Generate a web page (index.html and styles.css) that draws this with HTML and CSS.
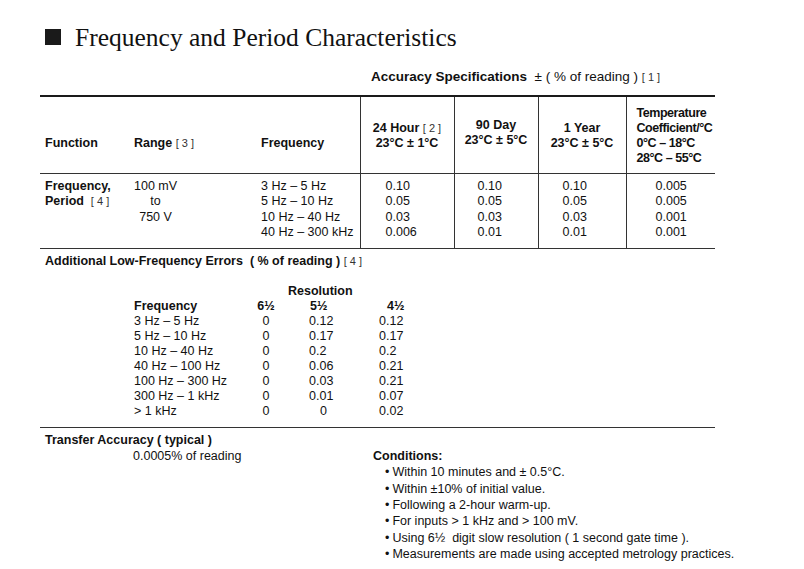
FILE: index.html
```html
<!DOCTYPE html>
<html lang="en">
<head>
    <meta charset="UTF-8">
    <title>Frequency and Period Characteristics</title>
    <link rel="stylesheet" href="styles.css">
</head>
<body>
    <div class="page">
        <h1 class="title"><span class="title-mark"></span>Frequency and Period Characteristics</h1>

        <p class="accuracy-head"><b>Accuracy Specifications</b> &nbsp;± ( % of reading ) <span class="ref">[ 1 ]</span></p>

        <table class="spec">
            <colgroup>
                <col class="c-func">
                <col class="c-range">
                <col class="c-freq">
                <col class="c-24h">
                <col class="c-90d">
                <col class="c-1y">
                <col class="c-temp">
            </colgroup>
            <thead>
                <tr>
                    <th class="h-left">Function</th>
                    <th class="h-left">Range <span class="ref">[ 3 ]</span></th>
                    <th class="h-left">Frequency</th>
                    <th class="h-mid sep">24 Hour <span class="ref">[ 2 ]</span><br>23°C ± 1°C</th>
                    <th class="h-mid sep h-90">90 Day<br>23°C ± 5°C</th>
                    <th class="h-mid sep">1 Year<br>23°C ± 5°C</th>
                    <th class="h-temp sep">Temperature<br>Coefficient/°C<br>0°C – 18°C<br>28°C – 55°C</th>
                </tr>
            </thead>
            <tbody>
                <tr>
                    <td class="func">Frequency,<br>Period &nbsp;<span class="ref">[ 4 ]</span></td>
                    <td class="range"><span class="range-box">100 mV<br>to<br>750 V</span></td>
                    <td class="freq">3 Hz – 5 Hz<br>5 Hz – 10 Hz<br>10 Hz – 40 Hz<br>40 Hz – 300 kHz</td>
                    <td class="val sep v-24h">0.10<br>0.05<br>0.03<br>0.006</td>
                    <td class="val sep v-90d">0.10<br>0.05<br>0.03<br>0.01</td>
                    <td class="val sep v-1y">0.10<br>0.05<br>0.03<br>0.01</td>
                    <td class="val sep v-temp">0.005<br>0.005<br>0.001<br>0.001</td>
                </tr>
            </tbody>
        </table>

        <section class="lowfreq">
            <h2 class="section-head">Additional Low-Frequency Errors &nbsp;( % of reading ) <span class="ref">[ 4 ]</span></h2>
            <table class="lf">
                <colgroup>
                    <col class="lf-pad">
                    <col class="lf-freq">
                    <col class="lf-6">
                    <col class="lf-5">
                    <col class="lf-4">
                </colgroup>
                <tr class="lf-head">
                    <td></td><td></td>
                    <th colspan="3" class="lf-res">Resolution</th>
                </tr>
                <tr class="lf-head">
                    <td></td>
                    <th>Frequency</th>
                    <th class="d6">6½</th>
                    <th class="d5">5½</th>
                    <th class="d4">4½</th>
                </tr>
                <tr><td></td><td>3 Hz – 5 Hz</td><td class="d6">0</td><td class="d5">0.12</td><td>0.12</td></tr>
                <tr><td></td><td>5 Hz – 10 Hz</td><td class="d6">0</td><td class="d5">0.17</td><td>0.17</td></tr>
                <tr><td></td><td>10 Hz – 40 Hz</td><td class="d6">0</td><td class="d5">0.2</td><td>0.2</td></tr>
                <tr><td></td><td>40 Hz – 100 Hz</td><td class="d6">0</td><td class="d5">0.06</td><td>0.21</td></tr>
                <tr><td></td><td>100 Hz – 300 Hz</td><td class="d6">0</td><td class="d5">0.03</td><td>0.21</td></tr>
                <tr><td></td><td>300 Hz – 1 kHz</td><td class="d6">0</td><td class="d5">0.01</td><td>0.07</td></tr>
                <tr><td></td><td>&gt; 1 kHz</td><td class="d6">0</td><td class="d5 zero">0</td><td>0.02</td></tr>
            </table>
        </section>

        <div class="bottom">
            <div class="transfer">
                <h2 class="section-head">Transfer Accuracy ( typical )</h2>
                <p class="transfer-val">0.0005% of reading</p>
            </div>
            <div class="conditions">
                <h3>Conditions:</h3>
                <ul>
                    <li>Within 10 minutes and ± 0.5°C.</li>
                    <li>Within ±10% of initial value.</li>
                    <li>Following a 2-hour warm-up.</li>
                    <li>For inputs &gt; 1 kHz and &gt; 100 mV.</li>
                    <li>Using 6½ &nbsp;digit slow resolution ( 1 second gate time ).</li>
                    <li>Measurements are made using accepted metrology practices.</li>
                </ul>
            </div>
        </div>
    </div>
</body>
</html>
```

FILE: styles.css
```css
* {
    margin: 0;
    padding: 0;
    box-sizing: border-box;
}

body {
    background: #fff;
    color: #111;
    font-family: "Liberation Sans", Arial, sans-serif;
    font-size: 12.5px;
    line-height: 15px;
}

.page {
    width: 804px;
    padding: 22px 0 0 40px;
}

/* Title */
.title {
    display: flex;
    align-items: center;
    height: 30px;
    font-family: "Liberation Serif", "Times New Roman", serif;
    font-weight: normal;
    font-size: 25.5px;
    color: #111;
}

.title-mark {
    width: 16px;
    height: 16px;
    margin: 0 14px 0 5px;
    background: #1a1a1a;
}

.accuracy-head {
    margin: 17px 0 0 331px;
    font-size: 13.5px;
    line-height: 16px;
}

.ref {
    font-weight: normal;
    font-size: 11px;
    color: #333;
}

/* Main spec table */
.spec {
    margin-top: 10px;
    width: 675px;
    table-layout: fixed;
    border-collapse: collapse;
    border-top: 2px solid #1a1a1a;
    border-bottom: 1.5px solid #333;
}

.c-func { width: 90px; }
.c-range { width: 127px; }
.c-freq { width: 103px; }
.c-24h { width: 94px; }
.c-90d { width: 84px; }
.c-1y { width: 88px; }
.c-temp { width: 89px; }

.spec th {
    font-weight: bold;
    line-height: 15px;
    padding: 9px 0 22px 0;
    vertical-align: bottom;
    white-space: nowrap;
    border-bottom: 1.5px solid #333;
}

.spec .sep {
    border-left: 1px solid #333;
}

.h-left {
    text-align: left;
    padding-left: 5px !important;
}

.h-left + .h-left {
    padding-left: 4px !important;
}

.h-mid {
    text-align: center;
}

.spec .h-90 {
    padding-bottom: 25px;
}

.spec .h-temp {
    text-align: left;
    padding: 9px 0 7px 10px;
    letter-spacing: -0.45px;
}

.spec td {
    vertical-align: top;
    line-height: 15.3px;
    padding: 5px 0 8px 0;
}

.spec .func {
    padding-left: 5px;
    font-weight: bold;
}

.spec .range {
    padding-left: 4px;
}

.range-box {
    display: inline-block;
    text-align: center;
}

.spec .freq {
    padding-left: 4px;
}

.v-24h { padding-left: 25px !important; }
.v-90d { padding-left: 23px !important; }
.v-1y { padding-left: 24px !important; }
.v-temp { padding-left: 29px !important; }

/* Low frequency errors */
.section-head {
    font-size: 12.5px;
    line-height: 15px;
    padding-left: 5px;
}

.lowfreq {
    margin-top: 5px;
    width: 675px;
    padding-bottom: 8px;
    border-bottom: 1.5px solid #333;
}

.lf {
    margin-top: 15px;
    border-collapse: collapse;
    table-layout: fixed;
    width: 420px;
}

.lf td,
.lf th {
    padding: 0;
    line-height: 15px;
    text-align: left;
    font-weight: normal;
}

.lf .lf-head th {
    font-weight: bold;
}

.lf-pad { width: 94px; }
.lf-freq { width: 118px; }
.lf-6 { width: 28px; }
.lf-5 { width: 99px; }
.lf-4 { width: 81px; }

.lf .lf-res {
    padding-left: 36px;
}

.lf .d6 {
    text-align: center;
}

.lf .d5 {
    padding-left: 29px;
}

.lf .lf-head .d5 {
    padding-left: 30px;
}

.lf .lf-head .d4 {
    padding-left: 8px;
}

.lf .zero {
    padding-left: 40px;
}

/* Transfer accuracy and conditions */
.bottom {
    display: flex;
    margin-top: 4px;
}

.transfer {
    width: 333px;
}

.transfer .section-head {
    line-height: 16px;
}

.transfer-val {
    padding-left: 93px;
    line-height: 16px;
}

.conditions {
    margin-top: 16px;
    line-height: 16.3px;
}

.conditions h3 {
    font-size: 12.5px;
    line-height: 16.3px;
}

.conditions ul {
    list-style: none;
    padding-left: 12px;
}

.conditions li::before {
    content: "•";
    margin-right: 3px;
}
```
